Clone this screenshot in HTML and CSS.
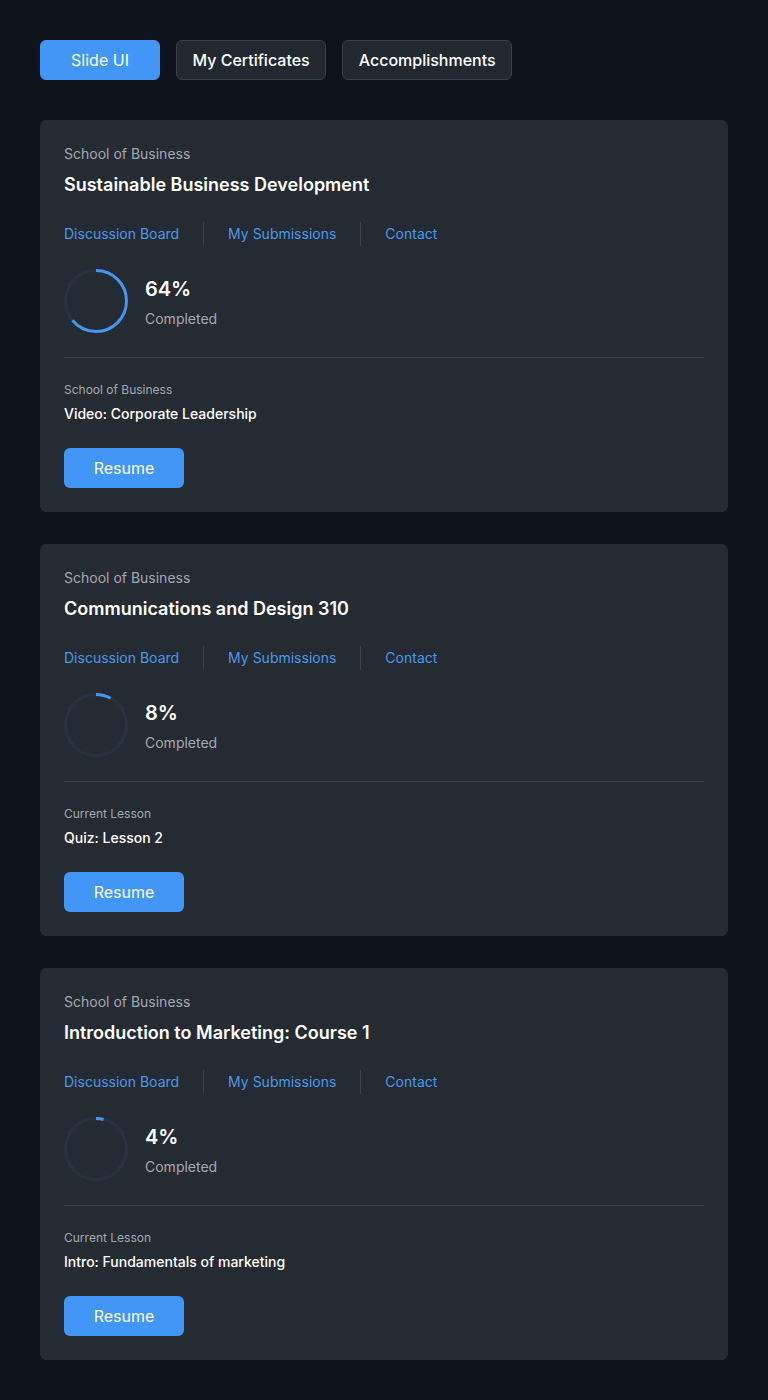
FILE: index.html
```html
<!DOCTYPE html>
<html lang="en">
<head>
<meta charset="utf-8">
<title>Courses</title>
<link rel="stylesheet" href="styles.css">
</head>
<body>
<div class="page">
  <nav class="tabs">
    <button class="tab tab-active">Slide UI</button>
    <button class="tab">My Certificates</button>
    <button class="tab">Accomplishments</button>
  </nav>

  <section class="card">
    <div class="school">School of Business</div>
    <h2 class="title">Sustainable Business Development</h2>
    <div class="links">
      <a class="link">Discussion Board</a>
      <span class="sep"></span>
      <a class="link">My Submissions</a>
      <span class="sep"></span>
      <a class="link">Contact</a>
    </div>
    <div class="progress">
      <svg class="ring" width="64" height="64" viewBox="0 0 64 64">
        <circle class="ring-track" cx="32" cy="32" r="30.5"/>
        <circle class="ring-bar" cx="32" cy="32" r="30.5" style="stroke-dasharray: 122.6 191.6"/>
      </svg>
      <div class="progress-text">
        <div class="pct">64%</div>
        <div class="done">Completed</div>
      </div>
    </div>
    <hr class="divider">
    <div class="lesson-label">School of Business</div>
    <div class="lesson">Video: Corporate Leadership</div>
    <button class="resume">Resume</button>
  </section>

  <section class="card">
    <div class="school">School of Business</div>
    <h2 class="title">Communications and Design 310</h2>
    <div class="links">
      <a class="link">Discussion Board</a>
      <span class="sep"></span>
      <a class="link">My Submissions</a>
      <span class="sep"></span>
      <a class="link">Contact</a>
    </div>
    <div class="progress">
      <svg class="ring" width="64" height="64" viewBox="0 0 64 64">
        <circle class="ring-track" cx="32" cy="32" r="30.5"/>
        <circle class="ring-bar" cx="32" cy="32" r="30.5" style="stroke-dasharray: 15.3 191.6"/>
      </svg>
      <div class="progress-text">
        <div class="pct">8%</div>
        <div class="done">Completed</div>
      </div>
    </div>
    <hr class="divider">
    <div class="lesson-label">Current Lesson</div>
    <div class="lesson">Quiz: Lesson 2</div>
    <button class="resume">Resume</button>
  </section>

  <section class="card">
    <div class="school">School of Business</div>
    <h2 class="title">Introduction to Marketing: Course 1</h2>
    <div class="links">
      <a class="link">Discussion Board</a>
      <span class="sep"></span>
      <a class="link">My Submissions</a>
      <span class="sep"></span>
      <a class="link">Contact</a>
    </div>
    <div class="progress">
      <svg class="ring" width="64" height="64" viewBox="0 0 64 64">
        <circle class="ring-track" cx="32" cy="32" r="30.5"/>
        <circle class="ring-bar" cx="32" cy="32" r="30.5" style="stroke-dasharray: 7.7 191.6"/>
      </svg>
      <div class="progress-text">
        <div class="pct">4%</div>
        <div class="done">Completed</div>
      </div>
    </div>
    <hr class="divider">
    <div class="lesson-label">Current Lesson</div>
    <div class="lesson">Intro: Fundamentals of marketing</div>
    <button class="resume">Resume</button>
  </section>
</div>
</body>
</html>
```

FILE: styles.css
```css
* { box-sizing: border-box; }
html, body {
  margin: 0;
  padding: 0;
  background: #0e131b;
}
body {
  font-family: Inter, "Liberation Sans", Arial, sans-serif;
  color: #ffffff;
  min-height: 1400px;
}
.page {
  padding: 40px;
  display: flex;
  flex-direction: column;
  gap: 32px;
}
.tabs {
  display: flex;
  gap: 16px;
  margin-bottom: 8px;
}
.tab {
  height: 40px;
  padding: 0 15.5px;
  border-radius: 6px;
  border: 1px solid #3a4148;
  background: #22282f;
  color: #ffffff;
  font-family: inherit;
  font-size: 16px;
  font-weight: 500;
  line-height: 20px;
}
.tab-active {
  width: 120px;
  background: #4196f6;
  border-color: #4196f6;
  font-weight: 400;
}
.card {
  background: #252b32;
  border-radius: 6px;
  padding: 24px;
  display: flex;
  flex-direction: column;
  align-items: flex-start;
}
.school {
  font-size: 14px;
  line-height: 20px;
  color: #a3a8ae;
}
.title {
  margin: 8px 0 0;
  font-size: 18px;
  line-height: 26px;
  font-weight: 600;
  color: #ffffff;
}
.links {
  margin-top: 24px;
  height: 24px;
  display: flex;
  align-items: center;
  gap: 24px;
}
.link {
  font-size: 14px;
  line-height: 20px;
  color: #4b98ec;
  font-weight: 400;
}
.sep {
  width: 1px;
  height: 24px;
  background: #3b424a;
}
.progress {
  margin-top: 23px;
  display: flex;
  align-items: center;
  gap: 17px;
}
.ring {
  display: block;
  transform: rotate(-90deg);
}
.ring-track {
  fill: none;
  stroke: #283241;
  stroke-width: 3;
}
.ring-bar {
  fill: none;
  stroke: #4596f0;
  stroke-width: 3;
}
.progress-text {
  display: flex;
  flex-direction: column;
  gap: 6px;
  margin-top: 2px;
}
.pct {
  font-size: 20px;
  line-height: 28px;
  font-weight: 600;
}
.done {
  font-size: 14px;
  line-height: 20px;
  color: #a3a8ae;
}
.divider {
  align-self: stretch;
  margin: 24px 0 0;
  border: none;
  height: 1px;
  background: #3a4148;
}
.lesson-label {
  margin-top: 24px;
  font-size: 12px;
  line-height: 16px;
  color: #a3a8ae;
}
.lesson {
  margin-top: 6px;
  font-size: 14px;
  line-height: 20px;
  font-weight: 500;
  color: #ffffff;
}
.resume {
  margin-top: 24px;
  width: 120px;
  height: 40px;
  border: none;
  border-radius: 6px;
  background: #4196f6;
  color: #ffffff;
  font-family: inherit;
  font-size: 16px;
  font-weight: 400;
}
```
